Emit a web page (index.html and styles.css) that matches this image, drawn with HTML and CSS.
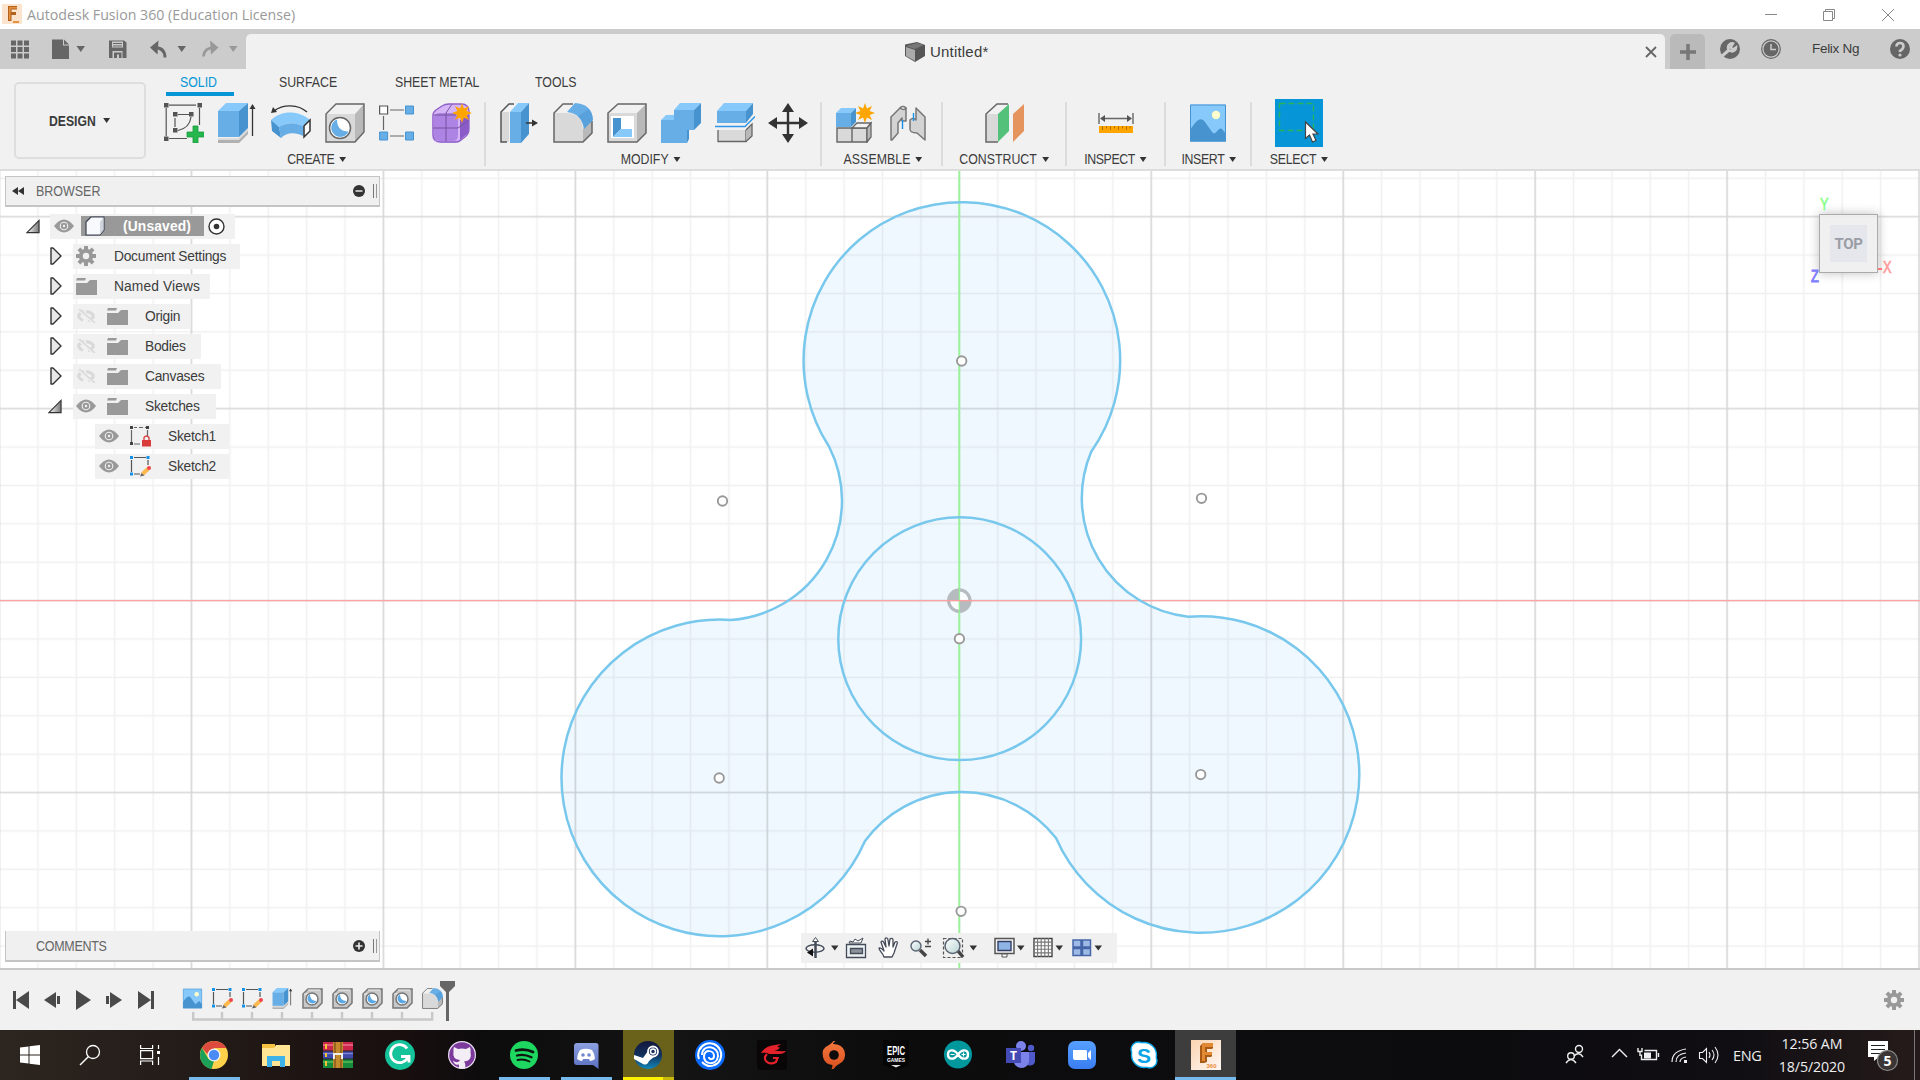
FILE: index.html
```html
<!DOCTYPE html>
<html lang="en">
<head>
<meta charset="utf-8">
<title>Autodesk Fusion 360 (Education License)</title>
<link rel="stylesheet" href="styles.css">
</head>
<body>
<svg class="defs" aria-hidden="true">
  <defs>
    <linearGradient id="gTri" x1="0" y1="0" x2="1" y2="0"><stop offset="0" stop-color="#fff"/><stop offset="1" stop-color="#777"/></linearGradient>
    <linearGradient id="gSteam" x1="0" y1="0" x2="0" y2="1"><stop offset="0" stop-color="#13173c"/><stop offset=".5" stop-color="#12305c"/><stop offset="1" stop-color="#1387b8"/></linearGradient>
    <linearGradient id="gDiscord" x1="0" y1="0" x2="0" y2="1"><stop offset="0" stop-color="#8ca0e0"/><stop offset="1" stop-color="#5a6fc0"/></linearGradient>
    <linearGradient id="gZoom" x1="0" y1="0" x2="0" y2="1"><stop offset="0" stop-color="#56a0ff"/><stop offset="1" stop-color="#3a7df2"/></linearGradient>
    <linearGradient id="gOrigin" x1="0" y1="0" x2="0" y2="1"><stop offset="0" stop-color="#f5793f"/><stop offset="1" stop-color="#d9501e"/></linearGradient>
    <linearGradient id="gF" x1="0" y1="0" x2="1" y2="1"><stop offset="0" stop-color="#fbd3b0"/><stop offset=".6" stop-color="#fdeadb"/><stop offset="1" stop-color="#fff8f2"/></linearGradient>
    <linearGradient id="gLens" x1="0" y1="0" x2="1" y2="1"><stop offset="0" stop-color="#fff"/><stop offset="1" stop-color="#b9d3d3"/></linearGradient>
  </defs>
  <symbol id="star" viewBox="-10 -10 20 20"><path fill="#ffa500" d="M0-10 1.900-4.600 7.100-7.100 4.600-1.900 10 0 4.600 1.900 7.100 7.100 1.900 4.600 0 10-1.900 4.600-7.100 7.100-4.600 1.900-10 0-4.600-1.900-7.100-7.100-1.900-4.600z"/></symbol>
  <symbol id="i-sketch" viewBox="0 0 40 40"><g fill="none" stroke="#555" stroke-width="1.200"><path d="M5 2.200h27M2.200 5v28M35.500 5v17M5 35.500h18M11 15v9M14 11.500h11M27 14c-1 8-6 12-13 13.500"/></g><path fill="#555" d="M0 0h4.500v4.500H0zM33.500 0H38v4.500h-4.500zM0 33.500h4.500V38H0zM9 9h4.500v4.500H9zM25 9h4.500v4.500H25zM9 25h4.500v4.500H9z"/><path fill="#26b64e" stroke="#1a9c3f" stroke-width=".8" d="M29 23h5v6h6v5h-6v6h-5v-6h-6v-5h6z"/></symbol>
  <symbol id="i-extrude" viewBox="0 0 40 40"><path fill="#b0b0b0" d="M1 35h21l9-9v5l-9 9H1z"/><path fill="#dcdcdc" d="M1 35h21l9-9v2l-9 9H1z"/><path fill="#68aee6" d="M1 8h21v26H1z"/><path fill="#87c9fb" d="M1 8l8-8h22l-9 8z"/><path fill="#4693d0" d="M22 8l9-8v25l-9 9z"/><path d="M35.500 33V4" stroke="#333" stroke-width="1.300"/><path fill="#333" d="M32.500 6l3-5 3 5z"/></symbol>
  <symbol id="i-revolve" viewBox="0 0 40 40"><path d="M3 8C12 1 27 1 36 9" fill="none" stroke="#333" stroke-width="1.400"/><path fill="#333" d="M0 10l2-6 4 5z"/><path fill="#87c9fb" d="M0 17C10 7 28 7 39 17l-6 7c-8-5-17-5-25 0z"/><path fill="#68aee6" d="M8 24c8-5 17-5 25 0l-1 9c-7-4-17-4-22 2z"/><path fill="#4693d0" d="M0 17l8 7 2 11-9-7z"/><path fill="#fff" stroke="#333" stroke-width="1.500" d="M33 23l6-6v11l-6 6z"/></symbol>
  <symbol id="i-hole" viewBox="0 0 40 40"><path fill="#d9d9d9" d="M1 11h29v28H1z"/><path fill="#f1f1f1" d="M1 11L11 1h28l-9 10z"/><path fill="#b9b9b9" d="M30 11l9-10v28l-9 10z"/><path fill="none" stroke="#666" stroke-width="1.400" d="M1 11L11 1h28v28L30 39H1z"/><circle cx="15" cy="25" r="10.500" fill="#fff" stroke="#666" stroke-width="1.500"/><path fill="#68aee6" d="M12 16.500c0 8 4 12 11.500 12A9 9 0 1 1 12 16.500z"/></symbol>
  <symbol id="i-pattern" viewBox="0 0 40 40"><path fill="none" stroke="#666" stroke-width="1.200" d="M11 7h14M4.500 13v14M11 33h14"/><path fill="#fff" stroke="#555" stroke-width="1.200" d="M.6 3h8v8h-8z"/><path fill="#68aee6" stroke="#4693d0" d="M26.500 3h8v8h-8zM.6 29h8v8h-8zM26.500 29h8v8h-8z"/></symbol>
  <symbol id="i-form" viewBox="0 0 40 40"><path fill="#d5b5f7" d="M0 13Q0 9 3 7l6-4q3-2 7-2h15q6 0 6 7v18q0 5-4 8l-4 4q-2 2-6 2H8q-8 0-8-8z"/><path fill="#ad84e4" d="M2 14q1-4 6-4h14q4 0 4 5v17q0 6-5 6H8q-6 0-6-7z"/><path fill="#8b5bc8" d="M28 17l9-6v15q0 4-3 6l-6 5z"/><path fill="none" stroke="#77539f" d="M1 25h25l11-8M14 10v29M14 10l6-9M2 12h22"/><path fill="none" stroke="#8f61c9" stroke-width="1.300" d="M1 13Q1 9 4 7l6-4q3-2 7-2h13q6 0 7 7v18q0 5-4 8l-4 3q-2 2-6 2H9q-8 0-8-8z"/><use href="#star" x="20" y="0" width="20" height="20"/></symbol>
  <symbol id="i-press" viewBox="0 0 40 40"><path fill="#d9d9d9" d="M1 9h8v30H1z"/><path fill="#f3f3f3" d="M1 9l8-8h8l-8 8z"/><path fill="none" stroke="#555" stroke-width="1.500" d="M14 1H9L1 9v30h6"/><path fill="#68aee6" d="M10 9h11v31H10z"/><path fill="#87c9fb" d="M10 9l8-9h11l-8 9z"/><path fill="#4693d0" d="M21 9l8-9v31l-8 9z"/><path stroke="#333" stroke-width="1.500" d="M26 20h8"/><path fill="#333" d="M32 16.500l6 3.500-6 3.500z"/></symbol>
  <symbol id="i-fillet" viewBox="0 0 40 40"><path fill="#d9d9d9" d="M1 10h13q15 1 16 16v13H1z"/><path fill="#f1f1f1" d="M1 10l9-9h13l-9 9z"/><path fill="#b9b9b9" d="M30 26l9-9v14l-9 8z"/><path fill="none" stroke="#666" stroke-width="1.500" d="M20 1H10l-9 9v29h29l9-9V18"/><path fill="#68aee6" d="M14 9l8-9q17 1 18 17l-9 9Q29 11 14 9z"/><path fill="#4693d0" d="M25 13l11-7q4 5 4 11l-9 9q-1-7-6-13z" opacity=".45"/></symbol>
  <symbol id="i-shell" viewBox="0 0 40 40"><path fill="#d9d9d9" d="M1 10h29v29H1z"/><path fill="#f1f1f1" d="M1 10l10-9h28l-9 9z"/><path fill="#b9b9b9" d="M30 10l9-9v29l-9 9z"/><path fill="none" stroke="#666" stroke-width="1.500" d="M1 10l10-9h28v29l-9 9H1z"/><path fill="#fff" d="M4 13h23v22H4z"/><path fill="#4693d0" d="M6 15h8v11l-8 8z"/><path fill="#87c9fb" d="M14 26h11v8H6z"/></symbol>
  <symbol id="i-combine" viewBox="0 0 40 40"><path fill="#68aee6" d="M0 17h13V7h20v20h-7v13H0z"/><path fill="#87c9fb" d="M0 17l5-5h8v5zM13 7l6-7h21l-7 7z"/><path fill="#4693d0" d="M33 7l7-7v20l-7 7zM26 27h1l1 0v9l-2 4z"/></symbol>
  <symbol id="i-split" viewBox="0 0 40 40"><path fill="#68aee6" d="M2 8h29v12H2z"/><path fill="#87c9fb" d="M2 8l7-8h29l-7 8z"/><path fill="#4693d0" d="M31 8l7-8v11l-7 9z"/><path fill="none" stroke="#2f95e8" stroke-width="1.500" d="M0 23.500h30l10-10"/><path fill="#d9d9d9" stroke="#666" stroke-width="1.300" d="M3 27v11.500h28V27"/><path fill="#b9b9b9" stroke="#666" stroke-width="1.300" d="M31 27l6-6v12l-6 5.500"/></symbol>
  <symbol id="i-move" viewBox="0 0 40 40"><path stroke="#333" stroke-width="2.400" d="M20 6v28M6 20h28"/><path fill="#333" d="M20 0l6 9H14zM20 40l6-9H14zM0 20l9-6v12zM40 20l-9-6v12z"/></symbol>
  <symbol id="i-comp" viewBox="0 0 40 40"><path fill="#d9d9d9" stroke="#666" stroke-width="1.400" d="M1 25h15v14H1zM16 25h15v14H16z"/><path fill="#f1f1f1" stroke="#666" stroke-width="1.300" d="M16 25l5-5h14l-4 5z"/><path fill="#b9b9b9" stroke="#666" stroke-width="1.300" d="M31 25l4-5v14l-4 5z"/><path fill="#68aee6" d="M0 10h15v14H0z"/><path fill="#87c9fb" d="M0 10l5-5h15l-5 5z"/><path fill="#4693d0" d="M15 10l5-5v14l-5 5z"/><use href="#star" x="19" y="0" width="20" height="20"/></symbol>
  <symbol id="i-joint" viewBox="0 0 40 40"><g fill="#d3d3d3" stroke="#777" stroke-width="1.500" stroke-linejoin="round"><path d="M2 14L11 5q3-3 6 0v13h-4v-3l-4 5v10l-6 7H2z"/><path d="M36 37l-8-7q-8 0-7-5v-8q3-3 6 0V5l9 9z"/><path fill="#f4f4f4" d="M11 5q3-3 6 0-2 3-6 0z"/></g><path stroke="#1791e8" stroke-width="1.400" d="M13.500 17v9M24.500 10v8"/></symbol>
  <symbol id="i-plane" viewBox="0 0 40 40"><path fill="#d9d9d9" d="M1 11h12v28H1z"/><path fill="#f1f1f1" d="M1 11L12 1h11L13 11z"/><path fill="none" stroke="#666" stroke-width="1.500" d="M23 1H12L1 11v28h12"/><path fill="#53c17a" d="M13 11L24 1v27L13 39z"/><path fill="#e6945e" d="M28 11L39 1v27L28 39z"/></symbol>
  <symbol id="i-ruler" viewBox="0 0 40 40"><path stroke="#666" stroke-width="1.400" d="M3 10v11M37 10v11M6 15.500h28"/><path fill="#555" d="M4 15.500l5-3.500v7zM36 15.500L31 12v7z"/><path fill="#ffa500" d="M3 23h34v7H3z"/><path stroke="#b26f00" d="M6.500 23v4M10.500 23v2.500M14.500 23v4M18.500 23v2.500M22.500 23v4M26.500 23v2.500M30.500 23v4M34 23v2.500"/></symbol>
  <symbol id="i-image" viewBox="0 0 40 40"><path fill="#87c9fb" d="M2 1.500h36v37H2z"/><path fill="#4693d0" d="M2 27C7 20 12 12 17 19l7 10c4 5 6-6 10-3l4 5v7.500H2z"/><circle cx="28" cy="12" r="4.200" fill="#ffc"/><path fill="none" stroke="#4693d0" d="M2.500 2h35v36h-35z"/></symbol>
  <symbol id="i-select" viewBox="0 0 48 48"><path fill="#0696d7" d="M0 0h48v48H0z"/><path fill="none" stroke="#27b35c" stroke-width="1.300" stroke-dasharray="6 3" d="M4.500 4.500h34v27h-34z"/><path fill="#fff" stroke="#444" stroke-width="1.200" d="M30.500 23v16.500l4-3.500 3 7 3.500-1.500-3-6.500h5z"/></symbol>
  <symbol id="i-eye" viewBox="0 0 20 14"><path fill="#999" d="M0 7q10-13 20 0-10 13-20 0z"/><circle cx="10" cy="7" r="4.300" fill="#f0f0f0"/><circle cx="10" cy="7" r="3.200" fill="#999"/><circle cx="10" cy="7" r="1.200" fill="#f0f0f0"/></symbol>
  <symbol id="i-eyeoff" viewBox="0 0 20 14"><path fill="none" stroke="#d9d9d9" stroke-width="3" d="M2 7q3-4 6-4.500M18 7q-3 4-6 4.500M10 3q4-1 8 4M2 7q2 3 5 4.500"/><path stroke="#efefef" stroke-width="3" d="M2 0l16 14"/><path stroke="#d9d9d9" stroke-width="1.500" d="M2-1l17 15"/></symbol>
  <symbol id="i-folder" viewBox="0 0 21 17"><path fill="#999" d="M0 5h11l3-3h7v15H0zM1 0h9l-1 2.500H0z"/></symbol>
  <symbol id="i-gear" viewBox="0 0 20 20"><path fill="none" stroke="#999" stroke-width="4" d="M10 0v4M10 16v4M0 10h4M16 10h4M2.900 2.900l3 3M14.100 14.100l3 3M2.900 17.100l3-3M14.100 5.900l3-3"/><circle cx="10" cy="10" r="5.200" fill="none" stroke="#999" stroke-width="4"/></symbol>
  <symbol id="i-cube" viewBox="0 0 20 20"><path fill="#f7f9fc" stroke="#3d4354" stroke-width="1.200" stroke-linejoin="round" d="M1 6l5-5h13v13l-4 5H1z"/><path fill="#cfd3dc" d="M15 6l3.500-4.500V14L15 18.500z"/></symbol>
  <symbol id="i-open" viewBox="0 0 15 15"><path fill="url(#gTri)" stroke="#333" stroke-width="1.200" d="M1 14L14 1v13z"/></symbol>
  <symbol id="i-closed" viewBox="0 0 12 18"><path fill="#e8e8e8" stroke="#333" stroke-width="1.400" stroke-linejoin="round" d="M1 1h2l8 8-8 8H1z"/></symbol>
  <symbol id="i-lock" viewBox="0 0 21 21"><path fill="none" stroke="#666" stroke-width="1.200" d="M4 1.500h3M9 1.500h4M15 1.500h1M1.500 4v12M4 18h6M17.500 4v6"/><path fill="#444" d="M0 0h3v3H0zM16 0h3v3h-3zM0 16h3v3H0z"/><path fill="#d93a3a" d="M12 14h9v6.500h-9z"/><path fill="none" stroke="#d93a3a" stroke-width="1.300" d="M14 14v-2.500q2.500-3 5 0V14"/></symbol>
  <symbol id="i-edit" viewBox="0 0 21 21"><path fill="none" stroke="#555" stroke-width="1.200" d="M4 1.500h12M1.500 4v12M4 18h6M18 4v5"/><path fill="#1791e8" d="M0 0h3v3H0zM16.500 0h3v3h-3zM0 16.500h3v3H0z"/><path stroke="#fdb94d" stroke-width="4" d="M12.500 18l5.500-5"/><path fill="#666" d="M10 20.500l1.500-3.500 3 2.500z"/><circle cx="19" cy="12" r="2" fill="#f2444b"/></symbol>
  <symbol id="i-thole" viewBox="0 0 21 21"><path fill="#c9c9c9" stroke="#777" stroke-width="1.500" d="M1 6l5-5h14v14l-5 5H1z"/><path stroke="#eee" d="M2 6h4M6 2h12"/><circle cx="10" cy="11" r="6" fill="#fff" stroke="#777" stroke-width="1.500"/><path fill="#5aa9e6" d="M8 6.500q0 6 6.500 6.500A4.800 4.800 0 1 1 8 6.500z"/></symbol>
  <symbol id="i-winrar" viewBox="0 0 32 26"><path fill="#c9264a" d="M1 0h30v9H1z"/><path fill="#4149a8" d="M1 9h30v8H1z"/><path fill="#188a3c" d="M1 17h30v9H1z"/><path stroke="#222" d="M1 9h30M1 17h30"/><path stroke="#f07a9a" stroke-width="1.300" d="M1 3h30"/><path stroke="#8185d8" stroke-width="1.300" d="M1 11.500h30"/><path stroke="#5dc45c" stroke-width="1.300" d="M1 20h30"/><path fill="#f5c13c" d="M3 2h2v5H3zM3 11h2v4H3zM3 19h2v5H3z"/><path fill="#c58a2d" d="M11 0h10v26H11z"/><path stroke="#6b4512" d="M13 0v26M19 0v26"/><path fill="none" stroke="#eee" stroke-width="2" d="M12 17v-5h8v5"/></symbol>
</svg>

<div class="window">
  <header class="titlebar">
    <svg class="app-icon" viewBox="0 0 20 20"><path fill="#fbe3cd" d="M0 0h20v20H0z"/><path fill="#b0611d" d="M6 2h9v3.500H9.500V8H14v3H9.500v6H6z"/><path fill="#e6913d" d="M7 3h8v1.500H8.500V16H7zM11 17h6v2h-6z"/></svg>
    <span class="app-name">Autodesk Fusion 360 (Education License)</span>
    <svg class="win-controls" viewBox="0 0 130 14"><g fill="none" stroke="#888" stroke-width="1"><path d="M0 6.500h12M58.500 3.500h9v9h-9zM60.500 3.500v-2h9v9h-2M117 1l12 12M129 1l-12 12"/></g></svg>
  </header>

  <div class="tabbar">
    <svg class="quick" viewBox="0 0 246 40"><g fill="#666"><path d="M11 11.500h5v5h-5zM17.500 11.500h5v5h-5zM24 11.500h5v5h-5zM11 18h5v5h-5zM17.500 18h5v5h-5zM24 18h5v5h-5zM11 24.500h5v5h-5zM17.500 24.500h5v5h-5zM24 24.500h5v5h-5z"/><path d="M52 10.500h11v6h6V30H52zM64 10.500l5 5h-5zM76.500 17h8.500l-4.250 6zM177.500 17h8.500l-4.250 6zM109 11.500h15l2.500 2V29H109z"/><path d="M150 18.500l8.500-7-1 14z"/></g><path fill="#ccc" d="M112 12.500h11v6h-11zM112.500 22h10v7h-10z"/><path fill="#666" d="M113 14h9v1h-9zM113 16.500h9v1h-9zM114 23.500h7.500V29H119v-3.500h-2V29h-3z"/><path fill="none" stroke="#666" stroke-width="2.800" d="M154 18.500q11 0 11 10"/><path fill="none" stroke="#999" stroke-width="2.600" d="M215 18.500q-11 0-11.500 9"/><path fill="#999" d="M218.500 18.500l-8.500-7 1 14zM229 17h8.500l-4.250 6z"/></svg>
    <div class="doc-tab">
      <svg class="doc-icon" viewBox="0 0 20 20"><path fill="#555" d="M0 2.500L12 0l8 3v11l-10 6-10-6z"/><path fill="#aaa" d="M1 5l9 3v11l-9-5z"/><path fill="#777" d="M1 4l11-3 7 2-9 4z"/></svg>
      <span class="doc-name">Untitled*</span>
      <svg class="doc-close" viewBox="0 0 12 12"><path stroke="#666" stroke-width="1.800" d="M1 1l10 10M11 1L1 11"/></svg>
    </div>
    <div class="new-tab"><svg viewBox="0 0 16 16"><path stroke="#777" stroke-width="3.500" d="M8 0v16M0 8h16"/></svg></div>
    <svg class="round wrench" viewBox="0 0 20 20"><circle cx="10" cy="10" r="10" fill="#666"/><path fill="none" stroke="#ccc" stroke-width="3" d="M1 18l8-7"/><path fill="none" stroke="#ccc" stroke-width="2.500" d="M13 4.500a4 4 0 1 0 3 4l-3 2-2.500-2z"/></svg>
    <svg class="round clock" viewBox="0 0 20 20"><circle cx="10" cy="10" r="9.300" fill="none" stroke="#666" stroke-width="1.200"/><circle cx="10" cy="10" r="7.500" fill="#666"/><path fill="none" stroke="#ccc" stroke-width="1.500" d="M10 5v5.500h5"/></svg>
    <span class="user">Felix Ng</span>
    <svg class="round help" viewBox="0 0 20 20"><circle cx="10" cy="10" r="10" fill="#666"/><path fill="none" stroke="#ccc" stroke-width="2.600" d="M6.500 7.500q0-3.500 3.500-3.500t3.500 3-3.500 5v1"/><circle cx="10" cy="16" r="1.600" fill="#ccc"/></svg>
  </div>

  <section class="ribbon">
    <div class="workspace"><div class="narrow">DESIGN<i class="caret"></i></div></div>
    <div class="ribbon-main">
      <nav class="tabs"><div class="t-solid"><span>SOLID</span></div><div class="t-surface"><span>SURFACE</span></div><div class="t-sheet"><span>SHEET METAL</span></div><div class="t-tools"><span>TOOLS</span></div></nav>
      <div class="groups">
        <div class="group create"><div class="icons"><svg><use href="#i-sketch"/></svg><svg><use href="#i-extrude"/></svg><svg><use href="#i-revolve"/></svg><svg><use href="#i-hole"/></svg><svg><use href="#i-pattern"/></svg><svg><use href="#i-form"/></svg></div><div class="label"><span>CREATE</span><i class="caret"></i></div></div>
        <div class="group modify"><div class="icons"><svg><use href="#i-press"/></svg><svg><use href="#i-fillet"/></svg><svg><use href="#i-shell"/></svg><svg><use href="#i-combine"/></svg><svg><use href="#i-split"/></svg><svg><use href="#i-move"/></svg></div><div class="label"><span>MODIFY</span><i class="caret"></i></div></div>
        <div class="group assemble"><div class="icons"><svg><use href="#i-comp"/></svg><svg><use href="#i-joint"/></svg></div><div class="label"><span>ASSEMBLE</span><i class="caret"></i></div></div>
        <div class="group construct"><div class="icons"><svg><use href="#i-plane"/></svg></div><div class="label"><span>CONSTRUCT</span><i class="caret"></i></div></div>
        <div class="group inspect"><div class="icons"><svg><use href="#i-ruler"/></svg></div><div class="label"><span>INSPECT</span><i class="caret"></i></div></div>
        <div class="group insert"><div class="icons"><svg><use href="#i-image"/></svg></div><div class="label"><span>INSERT</span><i class="caret"></i></div></div>
        <div class="group select"><div class="icons"><svg class="big"><use href="#i-select"/></svg></div><div class="label"><span>SELECT</span><i class="caret"></i></div></div>
      </div>
    </div>
  </section>

  <main class="canvas">
    <svg class="drawing" viewBox="0 171 1920 797">
      <defs>
        <pattern id="minor" patternUnits="userSpaceOnUse" x="940.100" y="581.400" width="38.390" height="38.390"><path stroke="#000" stroke-opacity=".06" stroke-width="1.500" d="M19.200 0v38.390M0 19.200h38.390"/></pattern>
        <pattern id="major" patternUnits="userSpaceOnUse" x="863.300" y="504.600" width="191.960" height="191.960"><path stroke="#000" stroke-opacity=".1" stroke-width="1.700" d="M96 0v191.960M0 96h191.960"/></pattern>
      </defs>
      <path class="profile" d="M829 446.500A158.300 158.300 0 1 1 1091.200 451.700A119.300 119.300 0 0 0 1188.300 616.700A158.300 158.300 0 1 1 1056 838A119.700 119.700 0 0 0 865 841A158.300 158.300 0 1 1 731 620A119.600 119.600 0 0 0 829 446.500z"/>
      <path fill="url(#minor)" d="M0 171h1920v797H0z"/><path fill="url(#major)" d="M0 171h1920v797H0z"/>
      <path stroke="#ffa3a3" stroke-width="1.400" d="M0 600.600h1920"/>
      <path stroke="#98f598" stroke-width="1.800" d="M959.300 171v797"/>
      <path class="edge" d="M829 446.500A158.300 158.300 0 1 1 1091.200 451.700A119.300 119.300 0 0 0 1188.300 616.700A158.300 158.300 0 1 1 1056 838A119.700 119.700 0 0 0 865 841A158.300 158.300 0 1 1 731 620A119.600 119.600 0 0 0 829 446.500z"/>
      <circle class="edge" cx="959.700" cy="638.700" r="121.400"/>
      <g class="points"><circle cx="961.700" cy="361" r="4.700"/><circle cx="722.500" cy="501" r="4.700"/><circle cx="1201.500" cy="498.300" r="4.700"/><circle cx="959.400" cy="638.700" r="4.700"/><circle cx="719.200" cy="778" r="4.700"/><circle cx="1200.700" cy="774.600" r="4.700"/><circle cx="961.100" cy="911.300" r="4.700"/></g>
      <circle cx="959.300" cy="600.600" r="10.700" fill="#fff" fill-opacity=".7" stroke="#b5bbbe" stroke-width="3.200"/><path fill="#b5bbbe" d="M959.300 600.600v-11a11 11 0 0 0-11 11zM959.300 600.600v11a11 11 0 0 0 11-11z"/>
      <path stroke="#8ff58f" stroke-width="1.100" d="M959.300 588v25"/><path stroke="#ff9c9c" stroke-width="1.300" d="M947 600.600h25"/>
    </svg>

    <div class="panel browser-head"><svg class="rewind" viewBox="0 0 12 8"><path fill="#333" d="M0 4l6-4v8zM6 4l6-4v8z"/></svg><span class="ptitle">BROWSER</span><svg class="dot" viewBox="0 0 12 12"><circle cx="6" cy="6" r="6" fill="#333"/><path stroke="#ddd" stroke-width="1.600" d="M2.500 6h7"/></svg><i class="grip"></i></div>
    <div class="tree">
      <div class="row r0"><svg class="tri"><use href="#i-open"/></svg><div class="cell"><svg class="eye"><use href="#i-eye"/></svg><div class="root"><svg class="cube"><use href="#i-cube"/></svg><b>(Unsaved)</b></div><svg class="radio" viewBox="0 0 17 17"><circle cx="8.500" cy="8.500" r="7.500" fill="#fff" stroke="#333" stroke-width="1.400"/><circle cx="8.500" cy="8.500" r="2.800" fill="#333"/></svg></div></div>
      <div class="row"><svg class="arrow"><use href="#i-closed"/></svg><div class="cell w167"><svg class="gear"><use href="#i-gear"/></svg><span>Document Settings</span></div></div>
      <div class="row"><svg class="arrow"><use href="#i-closed"/></svg><div class="cell w137"><svg class="folder"><use href="#i-folder"/></svg><span class="named">Named Views</span></div></div>
      <div class="row"><svg class="arrow"><use href="#i-closed"/></svg><div class="cell w118"><svg class="eye"><use href="#i-eyeoff"/></svg><svg class="folder"><use href="#i-folder"/></svg><span>Origin</span></div></div>
      <div class="row"><svg class="arrow"><use href="#i-closed"/></svg><div class="cell w128"><svg class="eye"><use href="#i-eyeoff"/></svg><svg class="folder"><use href="#i-folder"/></svg><span>Bodies</span></div></div>
      <div class="row"><svg class="arrow"><use href="#i-closed"/></svg><div class="cell w148"><svg class="eye"><use href="#i-eyeoff"/></svg><svg class="folder"><use href="#i-folder"/></svg><span>Canvases</span></div></div>
      <div class="row"><svg class="tri"><use href="#i-open"/></svg><div class="cell w143"><svg class="eye"><use href="#i-eye"/></svg><svg class="folder"><use href="#i-folder"/></svg><span>Sketches</span></div></div>
      <div class="row leaf"><div class="cell"><svg class="eye"><use href="#i-eye"/></svg><svg class="sk"><use href="#i-lock"/></svg><span>Sketch1</span></div></div>
      <div class="row leaf"><div class="cell"><svg class="eye"><use href="#i-eye"/></svg><svg class="sk"><use href="#i-edit"/></svg><span>Sketch2</span></div></div>
    </div>
    <div class="panel comments-head"><span class="ptitle">COMMENTS</span><svg class="dot" viewBox="0 0 12 12"><circle cx="6" cy="6" r="6" fill="#333"/><path stroke="#eee" stroke-width="1.600" d="M2.500 6h7M6 2.500v7"/></svg><i class="grip"></i></div>

    <div class="viewcube"><span class="face">TOP</span><span class="ax y">Y</span><span class="ax z">Z</span><span class="ax x">X</span><i class="tick"></i></div>

    <div class="navbar">
      <svg viewBox="0 0 316 30">
        <g fill="none" stroke="#444b59" stroke-width="1.500"><ellipse cx="14" cy="15.500" rx="9" ry="3.700"/><path d="M14.500 7v18" stroke-width="2.500"/></g><path fill="#fff" stroke="#444b59" d="M11.500 8.500l3-4 3 4z"/><path fill="#111" d="M6 19.500l6-4v8z"/>
        <path fill="#eef2f5" stroke="#444b59" stroke-width="1.300" d="M45.500 11.500h19v13h-19z"/><path fill="#8d939b" stroke="#444b59" stroke-width="1.300" d="M49.500 15.500h12v5h-12z"/><path fill="#fff" stroke="#444b59" d="M48 10l1-2 3 1 2-3 3 2 5-3-2 5z"/>
        <path fill="#fff" stroke="#444b59" stroke-width="1.300" stroke-linejoin="round" d="M83 24c-1-4-5-6-5-9 2-1 4 2 5 3l-3-9c1-2 3 0 3 1l2 4-1-8c1-2 3-1 3 1l1 6 1-7c1-1 3-1 3 1v7l2-5c2-1 3 0 2 2l-3 9-2 4z"/>
        <path stroke="#454545" stroke-width="3.500" d="M119 17l6 6"/><circle cx="115" cy="13" r="5" fill="url(#gLens)" stroke="#5a6472" stroke-width="1.400"/><path stroke="#444" stroke-width="1.300" d="M124 8.500h6M127 5.500v6M124 13.500h6"/>
        <path fill="none" stroke="#555" stroke-width="1.200" stroke-dasharray="3 2" d="M142.500 5.500h19v19h-19z"/><path stroke="#454545" stroke-width="3.500" d="M157 18l5 6"/><circle cx="151.500" cy="13" r="7.500" fill="url(#gLens)" stroke="#5a6472" stroke-width="1.500"/>
        <path fill="#f5f5f5" stroke="#555" stroke-width="1.500" d="M194 5.500h19v15h-19z"/><path fill="#8fb4e6" stroke="#333f66" stroke-width="1.400" d="M197 8.500h13v9h-13z"/><path fill="#fff" stroke="#555" d="M201 21h5v3h-5z"/>
        <path fill="#fff" stroke="#444" stroke-width="1.400" d="M233 5.500h18v18h-18z"/><path stroke="#777" stroke-width="1.100" d="M236.600 5v19M240.200 5v19M243.800 5v19M247.400 5v19M233 9.100h18M233 12.700h18M233 16.300h18M233 19.900h18"/>
        <path fill="#9db9e6" stroke="#4565a8" stroke-width="1.500" d="M272 7h8v7h-8zM281.500 7h8v7h-8zM272 15.500h8v7h-8zM281.500 15.500h8v7h-8z"/>
        <path fill="#333" d="M30 12.500h7.500l-3.700 5zM168.500 12.500h7.500l-3.700 5zM216 12.500h7.500l-3.700 5zM254.500 12.500h7.500l-3.700 5zM293.500 12.500h7.500l-3.700 5z"/>
      </svg>
    </div>
  </main>

  <section class="timeline">
    <svg class="playback" viewBox="0 0 146 20"><g fill="#4a4a4a"><path d="M0 1h3v18H0zM3 10l13-9v18zM31 10l12-8v16zM44 6h3v8h-3zM63 0l15 10-15 10zM93 6h3v8h-3zM97 2l12 8-12 8zM125 1l13 9-13 9zM138 1h3v18h-3z"/></g></svg>
    <div class="features">
      <div class="ficons"><svg><use href="#i-image"/></svg><svg><use href="#i-edit"/></svg><svg><use href="#i-edit"/></svg><svg><use href="#i-extrude"/></svg><svg><use href="#i-thole"/></svg><svg><use href="#i-thole"/></svg><svg><use href="#i-thole"/></svg><svg><use href="#i-thole"/></svg><svg><use href="#i-fillet"/></svg></div>
      <svg class="bracket" viewBox="0 0 242 9"><path fill="none" stroke="#c8c8c8" stroke-width="2.400" d="M1.200 0v7.500h239V0M30 0v7M60 0v7M90 0v7M120 0v7M150 0v7M180 0v7M210 0v7"/></svg>
      <svg class="marker" viewBox="0 0 16 40"><path fill="#666" d="M0 0h15v5l-6 6v29H6V11L0 5z"/></svg>
    </div>
    <svg class="tl-gear"><use href="#i-gear"/></svg>
  </section>

  <footer class="taskbar">
    <div class="tb sys"><svg viewBox="0 0 20 20"><path fill="#fff" d="M0 2.500L8.500 1.500v8H0zM9.500 1.300L20 0v9.500H9.500zM0 10.500h8.500v8L0 17.500zM9.500 10.500H20V20L9.500 18.700z"/></svg></div>
    <div class="tb sys"><svg viewBox="0 0 20 20"><circle cx="13" cy="7" r="6.500" fill="none" stroke="#fff" stroke-width="1.300"/><path stroke="#fff" stroke-width="1.400" d="M8.500 11.500L0 20"/></svg></div>
    <div class="tb sys last"><svg viewBox="0 0 20 20"><path fill="none" stroke="#fff" stroke-width="1.200" d="M.6 0v3.500h12V0M.6 5.600h12v8H.6zM.6 20v-4h12v4M18.500 0v4M18.500 12v8"/><path fill="#fff" d="M17 6h3v3h-3z"/></svg></div>
    <div class="tb on"><svg viewBox="0 0 28 28"><circle cx="14" cy="14" r="14" fill="#fdd24a"/><path fill="#dc4b3e" d="M14 14H8L2 7a14 14 0 0 1 24.300 0H14z"/><path fill="#1c9f57" d="M2 7l6.500 11L14 20l-2.500 7.900A14 14 0 0 1 2 7z"/><circle cx="14" cy="14" r="6.500" fill="#f4f6fa"/><circle cx="14" cy="14" r="5.200" fill="#4a8bf5"/></svg></div>
    <div class="tb"><svg viewBox="0 0 28 28"><path fill="#f5c341" d="M0 3h13v5H0z"/><path fill="#ffe594" d="M0 7h12l2-3h14v21H0z"/><path fill="#3db2e8" d="M5 15h18v11h-5v-6h-8v6H5z"/></svg></div>
    <div class="tb"><svg class="w32"><use href="#i-winrar"/></svg></div>
    <div class="tb"><svg class="w30" viewBox="0 0 30 30"><circle cx="15" cy="15" r="15" fill="#15c39a"/><path fill="none" stroke="#fff" stroke-width="2.800" d="M22 8.500A9 9 0 1 0 23 17M16 16.500h8v6"/></svg></div>
    <div class="tb"><svg viewBox="0 0 28 28"><circle cx="14" cy="14" r="13.400" fill="#7b3a9c" stroke="#e8dcf0" stroke-width="1.200"/><path fill="#f3edf6" d="M6 6l4 2q4-1 8 0l4-2q1 3 .5 5 2 9-6.500 9.500 2 2 1 7H11v-4q-5 1-6-4 3 3 6 1l1-1.500Q4 18 5.500 11 5 8 6 6z"/></svg></div>
    <div class="tb on"><svg viewBox="0 0 28 28"><circle cx="14" cy="14" r="14" fill="#1ed760"/><g fill="none" stroke="#0e1510" stroke-linecap="round"><path stroke-width="2.800" d="M6 9.500q9-2.500 17 1.500"/><path stroke-width="2.300" d="M7 14.500q7-2 14.500 1.700"/><path stroke-width="1.900" d="M7.500 19q6-1.500 12 1.500"/></g></svg></div>
    <div class="tb on"><svg viewBox="0 0 28 28"><path fill="url(#gDiscord)" d="M5 2h19q2.500 0 2.500 2.500V28l-5.500-4H5q-3 0-3-3V5q0-3 3-3z"/><path fill="#fff" d="M8 9q6-2.500 12 0 3 4 3 9-3 2-5 2l-1-2H11l-1 2q-2 0-5-2 0-5 3-9z"/><circle cx="11" cy="14" r="1.800" fill="#7186cf"/><circle cx="17" cy="14" r="1.800" fill="#7186cf"/></svg></div>
    <div class="tb on steam"><svg viewBox="0 0 28 28"><circle cx="14" cy="14" r="14" fill="url(#gSteam)"/><path fill="#fff" d="M0 14l9 3 5-7 7 5-6 5q-2 5-6 3L0 18z"/><circle cx="19" cy="10.500" r="5" fill="#17305a" stroke="#fff" stroke-width="1.800"/><circle cx="19" cy="10.500" r="2.500" fill="none" stroke="#fff" stroke-width="1.500"/></svg></div>
    <div class="tb"><svg class="w30" viewBox="0 0 30 30"><circle cx="15" cy="15" r="15" fill="#0a6cff"/><g fill="none" stroke="#fff" stroke-width="2"><path d="M4 19A11.500 11.500 0 1 1 20 25"/><path d="M7 15c0-12 17-9 16 1s-15 9-14 0c1-7 10-6 10 0 0 4-5 4-5 1"/><path d="M7 22q7 7 14 2"/></g></svg></div>
    <div class="tb"><svg class="w30" viewBox="0 0 30 30"><rect width="30" height="30" rx="3" fill="#080607"/><path fill="#e5222b" d="M4 13Q8 6 18 5l6-1-4 3 3 .5q-2 3-6 3 6 1 12 .5-2 3-7 3H12q-2-2-8-1z"/><path fill="none" stroke="#e5222b" stroke-width="2.200" d="M10 14q-4 4-.5 7.500T19 22l1.500-4H16"/></svg></div>
    <div class="tb origin"><svg viewBox="0 0 28 28"><path fill="url(#gOrigin)" d="M13 3q9 0 11.500 7 2.500 9-5.500 13-3 1.500-5.500 5h-2q1-2 1-4-8-1-9.500-8Q1 7 9 4q3-2 4.500-4h2q-2 1-2.500 3z"/><circle cx="14" cy="14" r="4.800" fill="#0d0b0b"/></svg></div>
    <div class="tb"><svg class="w30" viewBox="0 0 30 30"><path fill="#050505" d="M2 0h26v25l-13 5-13-5z"/><text class="epic" x="15" y="15" textLength="18" lengthAdjust="spacingAndGlyphs">EPIC</text><text class="epic small" x="15" y="22" textLength="18" lengthAdjust="spacingAndGlyphs">GAMES</text><path fill="#ddd" d="M10 25h10l-5 2.500z"/></svg></div>
    <div class="tb"><svg viewBox="0 0 28 28"><circle cx="14" cy="13.500" r="14" fill="#00979d"/><path fill="none" stroke="#fff" stroke-width="2.400" d="M14 13.500c-4-6-10-5-10 0s6 6 10 0 10-5 10 0-6 6-10 0"/><path stroke="#fff" stroke-width="1.200" d="M6.500 13.500h4M17.500 13.500h4M19.500 11.500v4"/></svg></div>
    <div class="tb"><svg class="w30" viewBox="0 0 30 30"><circle cx="16" cy="6" r="5" fill="#7b83eb"/><circle cx="26" cy="8" r="3.200" fill="#5059c9"/><path fill="#5059c9" d="M22 12h8v10q-2 5-8 3z"/><path fill="#7b83eb" d="M9 12h15v10q-2 6-8 6-6-1-7-5z"/><path fill="#444bb5" d="M1 8h15v15H1z"/><text class="tms" x="8.500" y="20">T</text></svg></div>
    <div class="tb"><svg viewBox="0 0 28 28"><rect width="28" height="28" rx="7" fill="url(#gZoom)"/><path fill="#fff" d="M5 9h13q1 0 1 2v8H7q-2 0-2-2zM20 12l3-3v10l-3-3z"/></svg></div>
    <div class="tb"><svg viewBox="0 0 28 28"><g fill="#fff" stroke="#0aa5e6" stroke-width="1.400"><circle cx="8.500" cy="8.500" r="7.500"/><circle cx="19.500" cy="19.500" r="7.500"/><circle cx="14" cy="14" r="12.500"/></g><circle cx="9" cy="9" r="7" fill="#fff"/><circle cx="19" cy="19" r="7" fill="#fff"/><text class="skype" x="14" y="21.500">S</text></svg></div>
    <div class="tb on active"><svg class="w30" viewBox="0 0 30 30"><path fill="url(#gF)" d="M0 0h30v30H0z"/><path fill="#a95a15" d="M9 6l3-3h10v5l-1 1h-5v3h5v4l-1 1h-4v5l-3 1H9z"/><path fill="#e18a33" d="M12 3h10v4h-8v5h7v3h-7v6h-3V5z"/><text class="n360" x="20.500" y="28">360</text></svg></div>
    <div class="tray">
      <svg viewBox="0 0 150 24"><g fill="none" stroke="#eee" stroke-width="1.400"><circle cx="13" cy="6" r="3.500"/><circle cx="5" cy="13" r="3.300"/><path d="M8 13q5-5 9 1M0 20q5-7 10 0M46 14l7.500-7.500L61 14M78.500 7.500h12v9h-15v-5M92.500 10v4M72 5v3.500h4V5M74 9v4"/><path d="M106 19q0-11 14-13M110 19q0-8 10-9M114 19q0-4 6-5" stroke-width="1.200"/><path d="M133.500 9.500h3l4-4v14l-4-4h-3zM143 9q2 3 0 6M146 7q4 5 0 10M149 4q6 8 0 16" stroke-width="1.100"/></g><path fill="#eee" d="M78 9.500h7v6h-7zM118 17h3v3h-3z"/></svg>
      <span class="lang">ENG</span>
      <div class="time"><span>12:56 AM</span><span>18/5/2020</span></div>
      <svg class="notif" viewBox="0 0 32 34"><path fill="#fff" d="M1 1h20v16H12l-5 4v-4H1z"/><path stroke="#222" d="M4 5.500h14M4 9.500h14M4 13.500h10"/><circle cx="20.500" cy="20.500" r="10" fill="#3b3635" stroke="#888" stroke-width="1.200"/><text class="badge" x="20.500" y="25.500">5</text></svg>
    </div>
  </footer>
</div>
</body>
</html>
```
FILE: styles.css
```css
* { box-sizing: border-box; }
body { margin: 0; width: 1920px; height: 1080px; overflow: hidden; background: #f1f1f1; font-family: "Liberation Sans", sans-serif; font-size: 14px; color: #3c3c3c; }
svg { display: block; flex: none; overflow: visible; }
.defs { position: absolute; width: 0; height: 0; }
.window { display: flex; flex-direction: column; height: 1080px; }

.titlebar { display: flex; align-items: center; height: 29px; padding: 0 25px 0 2px; background: #fff; }
.app-icon { width: 20px; height: 20px; margin-top: -1px; }
.app-name { flex: 1; margin-left: 5px; font-family: "Open Sans", "Noto Sans", sans-serif; font-size: 14.2px; color: #999; white-space: nowrap; }
.win-controls { width: 130px; height: 14px; }

.tabbar { display: flex; height: 40px; background: #ccc; }
.quick { width: 246px; height: 40px; }
.doc-tab { display: flex; align-items: center; width: 1419px; height: 35px; margin-top: 5px; padding-left: 659px; background: #f1f1f1; border-radius: 5px 5px 0 0; }
.doc-icon { width: 20px; height: 20px; }
.doc-name { flex: 1; margin-left: 5px; font-size: 15px; letter-spacing: .2px; }
.doc-close { width: 12px; height: 12px; margin-right: 8px; }
.new-tab { display: grid; place-items: center; width: 35px; height: 35px; margin: 5px 15px 0 5px; background: #bababa; border-radius: 5px 5px 0 0; }
.new-tab svg { width: 16px; height: 16px; }
.round { width: 20px; height: 20px; margin-top: 10px; }
.clock { margin-left: 21px; }
.user { width: 49px; margin: 11px 29px 0 31px; font-size: 13.5px; letter-spacing: -.3px; line-height: 18px; white-space: nowrap; }

.ribbon { display: flex; height: 102px; background: #f1f1f1; border-bottom: 2px solid #ddd; }
.workspace { display: flex; align-items: center; justify-content: center; width: 132px; height: 77px; margin: 13px 6px 0 14px; border: 2px solid #dedede; border-radius: 5px; font-weight: bold; font-size: 14.2px; }
.narrow { display: flex; align-items: center; gap: 9px; transform: scaleX(.86); }
.caret { width: 0; height: 0; border: 4.500px solid transparent; border-top: 5px solid #333; border-bottom: 0; }
.ribbon-main { display: flex; flex-direction: column; }
.tabs { display: flex; height: 28px; padding-top: 2px; font-size: 14.5px; line-height: 22px; white-space: nowrap; }
.tabs span { display: inline-block; transform: scaleX(.85); transform-origin: 0 50%; }
.t-solid { width: 68px; height: 25px; margin-left: 14px; border-bottom: 4px solid #0696d7; color: #0696d7; padding-left: 14px; }
.t-surface { width: 116px; margin-left: 45px; }
.t-sheet { width: 140px; }
.groups { display: flex; margin-top: 5px; }
.group { height: 64px; border-right: 2px solid #dcdcdc; }
.icons { display: flex; justify-content: center; gap: 13.700px; height: 41px; }
.icons svg { width: 40px; height: 40px; margin-top: 1px; }
.icons .big { width: 48px; height: 48px; margin-top: -3px; }
.label { display: flex; align-items: center; justify-content: center; gap: 6px; height: 18px; margin-top: 7px; font-size: 14.5px; transform: scaleX(.85); letter-spacing: -.3px; }
.create { width: 334px; } .create .label { letter-spacing: -.4px; padding-right: 3px; }
.modify { width: 336px; padding-left: 2px; } .modify .label { letter-spacing: 0; padding-right: 8px; }
.assemble { width: 121px; } .assemble .label { letter-spacing: .1px; margin-left: -4px; margin-right: -7px; }
.assemble .icons { padding-left: 2px; }
.construct { width: 124px; } .construct .label { letter-spacing: 0; }
.construct .icons { padding-left: 1px; }
.inspect { width: 99px; } .inspect .label { letter-spacing: -.5px; }
.insert { width: 86px; } .insert .label { letter-spacing: -.4px; padding-left: 2px; }
.select { width: 94px; border: 0; }

.canvas { position: relative; height: 797px; background: #fff; overflow: hidden; }
.drawing { width: 1920px; height: 797px; }
.profile { fill: #eff8fe; }
.edge { fill: none; stroke: #78c7ec; stroke-width: 2.500; }
.points { fill: #fff; stroke: #999; stroke-width: 1.900; }

.panel { position: absolute; left: 5px; width: 375px; height: 31px; display: flex; align-items: center; background: #f0f0f0; border: 1px solid #c4c4c4; border-bottom-width: 2px; color: #666; }
.browser-head { top: 5px; padding-left: 6px; }
.comments-head { top: 760px; padding-left: 30px; border-top: 0; }
.rewind { width: 12px; height: 8px; margin-right: 12px; }
.ptitle { flex: 1; font-size: 14.5px; transform: scaleX(.86); transform-origin: 0 50%; }
.comments-head .ptitle { letter-spacing: -.3px; }
.dot { width: 12px; height: 12px; }
.grip { width: 4px; height: 14px; margin: 0 2px 0 8px; border-left: 1px solid #777; border-right: 1px solid #999; }

.tree { position: absolute; left: 0; top: 40px; }
.row { display: flex; align-items: center; height: 30px; padding-left: 50px; }
.row.r0 { padding-left: 26px; }
.tri { width: 14px; height: 15px; margin-right: 10px; }
.row:not(.r0) .tri { margin-left: -2px; margin-right: 11px; }
.arrow { width: 12px; height: 18px; margin-right: 11px; }
.cell { display: flex; align-items: center; height: 25px; padding-left: 3px; background: #f1f1f1; font-size: 13.8px; letter-spacing: -.26px; }
.r0 .cell { width: 185px; padding-left: 4px; }
.eye { width: 20px; height: 14px; }
.root { display: flex; align-items: center; gap: 18px; width: 123px; height: 20px; margin: 0 4px 0 7px; padding-left: 4px; background: #999; color: #fff; letter-spacing: .15px; }
.cube { width: 20px; height: 20px; }
.radio { width: 17px; height: 17px; }
.gear { width: 20px; height: 20px; margin-right: 18px; }
.folder { width: 21px; height: 17px; margin-right: 17px; }
.eye + .folder { margin-left: 11px; margin-right: 17px; }
.named { letter-spacing: .1px; }
.leaf { padding-left: 95px; }
.leaf .cell { width: 134px; padding-left: 4px; }
.sk { width: 21px; height: 21px; margin: 0 17px 0 11px; }
.w167 { width: 167px; } .w137 { width: 137px; } .w118 { width: 118px; } .w128 { width: 128px; } .w148 { width: 148px; } .w143 { width: 143px; }

.viewcube { position: absolute; left: 1819px; top: 43px; width: 59px; height: 59px; display: grid; place-items: center; background: rgba(238,238,238,.88); border: 1px solid #aaa; box-shadow: 0 0 10px rgba(0,0,0,.25); }
.face { display: grid; place-items: center; width: 37px; height: 37px; background: #e5e7ec; color: #9a9da5; font: bold 15px Roboto, sans-serif; letter-spacing: -.3px; }
.ax { position: absolute; font-size: 16px; line-height: 16px; transform: scaleX(.8); transform-origin: 0 0; -webkit-text-stroke: .6px; }
.ax.y { left: 0; top: -18px; color: #8f8; }
.ax.z { left: -9px; top: 54px; color: #8080ff; -webkit-text-stroke: 1px; }
.ax.x { left: 63px; top: 45px; color: #ff9a9a; }
.tick { position: absolute; left: 58px; top: 53px; width: 4px; height: 2px; background: #f77; }

.navbar { position: absolute; left: 801px; top: 762px; width: 316px; height: 30px; background: #f0f0f0; }
.navbar svg { width: 316px; height: 30px; }

.timeline { display: flex; height: 62px; padding: 0 16px 0 13px; background: #f1f1f1; border-top: 2px solid #c8c8c8; }
.playback { width: 146px; height: 20px; margin-top: 20px; }
.features { position: relative; flex: 1; padding: 18px 0 0 23px; }
.ficons { display: flex; gap: 9px; }
.ficons svg { width: 21px; height: 21px; }
.bracket { width: 242px; height: 9px; margin: 3px 0 0 10px; }
.marker { position: absolute; left: 281px; top: 11px; width: 16px; height: 40px; }
.tl-gear { width: 20px; height: 20px; margin-top: 20px; }

.taskbar { display: flex; height: 50px; background: linear-gradient(90deg, #2c2520 0, #211916 240px, #190f0f 400px, #0d0c0d 480px, #151415 680px, #0d0c0d 900px, #0c0b0e 1500px, #100e13 1740px, #231a19 1900px); }
.tb { position: relative; display: grid; place-items: center; width: 62px; height: 50px; }
.tb svg { width: 28px; height: 28px; }
.tb .w30 { width: 30px; height: 30px; }
.tb .w32 { width: 32px; height: 26px; }
.sys { width: 60px; }
.sys svg { width: 20px; height: 20px; }
.sys.last { width: 63px; padding-right: 3px; }
.on::after { content: ""; position: absolute; left: 6px; bottom: 0; width: 51px; height: 3px; background: #76b9ed; }
.steam { background: linear-gradient(#6a611b, #6a611b) 6px 0 / 51px 50px no-repeat; }
.steam::after { background: linear-gradient(90deg, #fff000 40px, #c9b90b 40px); }
.active { background: linear-gradient(#3e3d3e, #3e3d3e) 0 0 / 61px 50px no-repeat; }
.active::after { left: 0; width: 61px; }
.epic { fill: #fff; font: bold 13px "Liberation Sans", sans-serif; text-anchor: middle; }
.epic.small { font-size: 6px; }
.tms { fill: #fff; font: bold 12px "Open Sans", sans-serif; text-anchor: middle; }
.skype { fill: #0aa5e6; font: bold 21px "Liberation Sans", sans-serif; text-anchor: middle; }
.n360 { fill: #e98b3c; font: bold 6px "Liberation Sans", sans-serif; text-anchor: middle; }
.tray { display: flex; flex: 1; align-items: center; margin-left: 329px; font-family: "Open Sans", "Noto Sans", sans-serif; color: #eee; background: linear-gradient(#777, #777) 348px 0 / 1px 50px no-repeat; }
.tray > svg { width: 150px; height: 24px; }
.lang { margin-left: 17px; width: 28px; font-size: 14.500px; letter-spacing: -.4px; }
.time { display: flex; flex-direction: column; align-items: center; width: 80px; margin-left: 11px; font-size: 14.2px; line-height: 23px; letter-spacing: -.1px; white-space: nowrap; }
.tray .notif { width: 32px; height: 34px; margin: 4px 0 0 15px; }
.badge { fill: #fff; font: bold 14px "Open Sans", sans-serif; text-anchor: middle; }
```
